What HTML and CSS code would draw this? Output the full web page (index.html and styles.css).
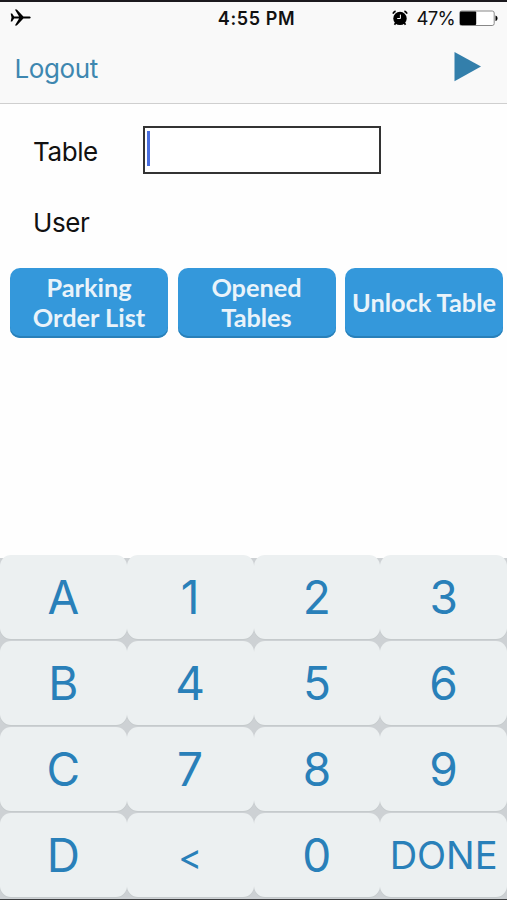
FILE: index.html
```html
<!DOCTYPE html>
<html lang="en">
<head>
  <meta charset="UTF-8" />
  <title>Table Login</title>
  <link rel="stylesheet" href="styles.css">
</head>
<body>

<div class="screen">
  <header class="top">
    <div class="status-bar">
      <svg class="plane" width="22" height="18" viewBox="0 0 22 18">
        <path d="M0.7 4.4h1.4l2 3h5L4.9 0.5h1.9l6.6 6.9h5.4c1.3 0 1.9 0.5 1.9 1.1s-0.6 1.1-1.9 1.1h-5.4l-6.6 6.9H4.9l4.2-6.9h-5l-2 3H0.7L1.5 8.5z" />
      </svg>
      <span class="time">4:55 PM</span>
      <div class="status-right">
        <svg class="alarm" width="16" height="16" viewBox="0 0 16 16">
          <circle cx="8" cy="8.4" r="6.7" />
          <path d="M0.9 3.6A5 5 0 0 1 3.6 1.1M15.1 3.6A5 5 0 0 0 12.4 1.1M3.8 12.8l-1.3 1.9M12.2 12.8l1.3 1.9" fill="none" stroke="#000" stroke-width="1.7" />
          <path d="M8.4 4.6v3.9H5.2" fill="none" stroke="#fff" stroke-width="1" />
        </svg>
        <span class="percent">47%</span>
        <svg class="battery" width="40" height="17" viewBox="0 0 40 17">
          <rect x="0.7" y="1" width="34.5" height="14.5" rx="2" fill="#fff" stroke="#888" stroke-width="1" />
          <rect x="1" y="1.5" width="16.2" height="13.5" rx="1" />
          <path d="M36.5 5.5c1.4 0.4 2 1.4 2 2.8s-0.6 2.4-2 2.8z" />
        </svg>
      </div>
    </div>
    <nav class="nav-bar">
      <a class="logout">Logout</a>
      <svg class="play" width="28" height="30" viewBox="0 0 28 30">
        <path d="M0.5 0L27 14.6L0.5 29.3z" />
      </svg>
    </nav>
  </header>

  <form class="login-form">
    <div class="input-group">
      <label for="table">Table</label>
      <div class="field" id="table"><span class="caret"></span></div>
    </div>
    <div class="input-group">
      <label>User</label>
    </div>
  </form>

  <div class="actions">
    <button type="button">Parking<br>Order List</button>
    <button type="button">Opened<br>Tables</button>
    <button type="button">Unlock Table</button>
  </div>

  <div class="keypad">
    <button type="button">A</button>
    <button type="button">1</button>
    <button type="button">2</button>
    <button type="button">3</button>
    <button type="button">B</button>
    <button type="button">4</button>
    <button type="button">5</button>
    <button type="button">6</button>
    <button type="button">C</button>
    <button type="button">7</button>
    <button type="button">8</button>
    <button type="button">9</button>
    <button type="button">D</button>
    <button type="button" class="back">&lt;</button>
    <button type="button">0</button>
    <button type="button" class="done">DONE</button>
  </div>
</div>

</body>
</html>
```
FILE: styles.css
```css
* {
  box-sizing: border-box;
}
body {
  margin: 0;
  font-family: Inter, "Liberation Sans", sans-serif;
  color: #111;
  background: #fefefe;
}
button {
  margin: 0;
  padding: 0;
  border: none;
  font-family: inherit;
}
.screen {
  display: flex;
  flex-direction: column;
  height: 900px;
  border-top: 2px solid #1c1a1e;
  border-bottom: 1px solid #3c3e40;
  overflow: hidden;
}
.top {
  height: 102px;
  background: #f9f9f9;
  border-bottom: 1px solid #cfcfcf;
}
.status-bar {
  display: grid;
  grid-template-columns: 1fr auto 1fr;
  align-items: center;
  height: 32px;
  padding: 0 8px 0 10px;
}
.time {
  padding-left: 4px;
  font-size: 18px;
  font-weight: 600;
  letter-spacing: 0.6px;
}
.status-right {
  display: flex;
  justify-content: flex-end;
  align-items: center;
}
.percent {
  margin: 0 4px 0 9px;
  font-size: 18.5px;
  letter-spacing: -0.7px;
}
.nav-bar {
  display: flex;
  justify-content: space-between;
  align-items: center;
  height: 65px;
  padding: 0 25px 0 14.5px;
}
.logout {
  padding-top: 3px;
  font-size: 26px;
  letter-spacing: -0.4px;
  color: #3e87b0;
}
.play {
  fill: #337fab;
}
.login-form {
  height: 164px;
  padding: 22px 0 0 33px;
}
.input-group {
  display: flex;
  align-items: center;
  height: 49px;
  margin-bottom: 22px;
}
.input-group label {
  width: 110px;
  padding-top: 1px;
  font-size: 26px;
  letter-spacing: -0.4px;
}
.field {
  width: 238px;
  height: 48px;
  margin-bottom: 1px;
  padding: 3px 2px;
  background: #fff;
  border: 2px solid #333;
}
.caret {
  display: block;
  width: 2.5px;
  height: 35px;
  background: #4a6fe0;
}
.actions {
  display: grid;
  grid-template-columns: repeat(3, 158px);
  column-gap: 9.5px;
  padding-left: 10px;
}
.actions button {
  height: 70px;
  padding-bottom: 2px;
  border-radius: 10px;
  font-family: Lato, sans-serif;
  font-size: 25.3px;
  font-weight: 700;
  line-height: 30px;
  color: #e9f3fa;
  background: #3498db;
  box-shadow: inset 0 -2px 0 #2980b9;
}
.keypad {
  display: grid;
  grid-template-columns: repeat(4, 1fr);
  grid-auto-rows: 84px;
  row-gap: 2px;
  margin-top: auto;
  padding-bottom: 2px;
  background: linear-gradient(#fefefe 3px, #cdd1d4 3px);
}
.keypad button {
  border-radius: 11px;
  font-size: 46px;
  color: #2980b9;
  background: #ecf0f1;
  box-shadow: 0 1px 0 #c5cacc;
}
.keypad .back {
  padding-top: 3px;
  font-size: 36px;
}
.keypad .done {
  font-size: 38px;
}
```
